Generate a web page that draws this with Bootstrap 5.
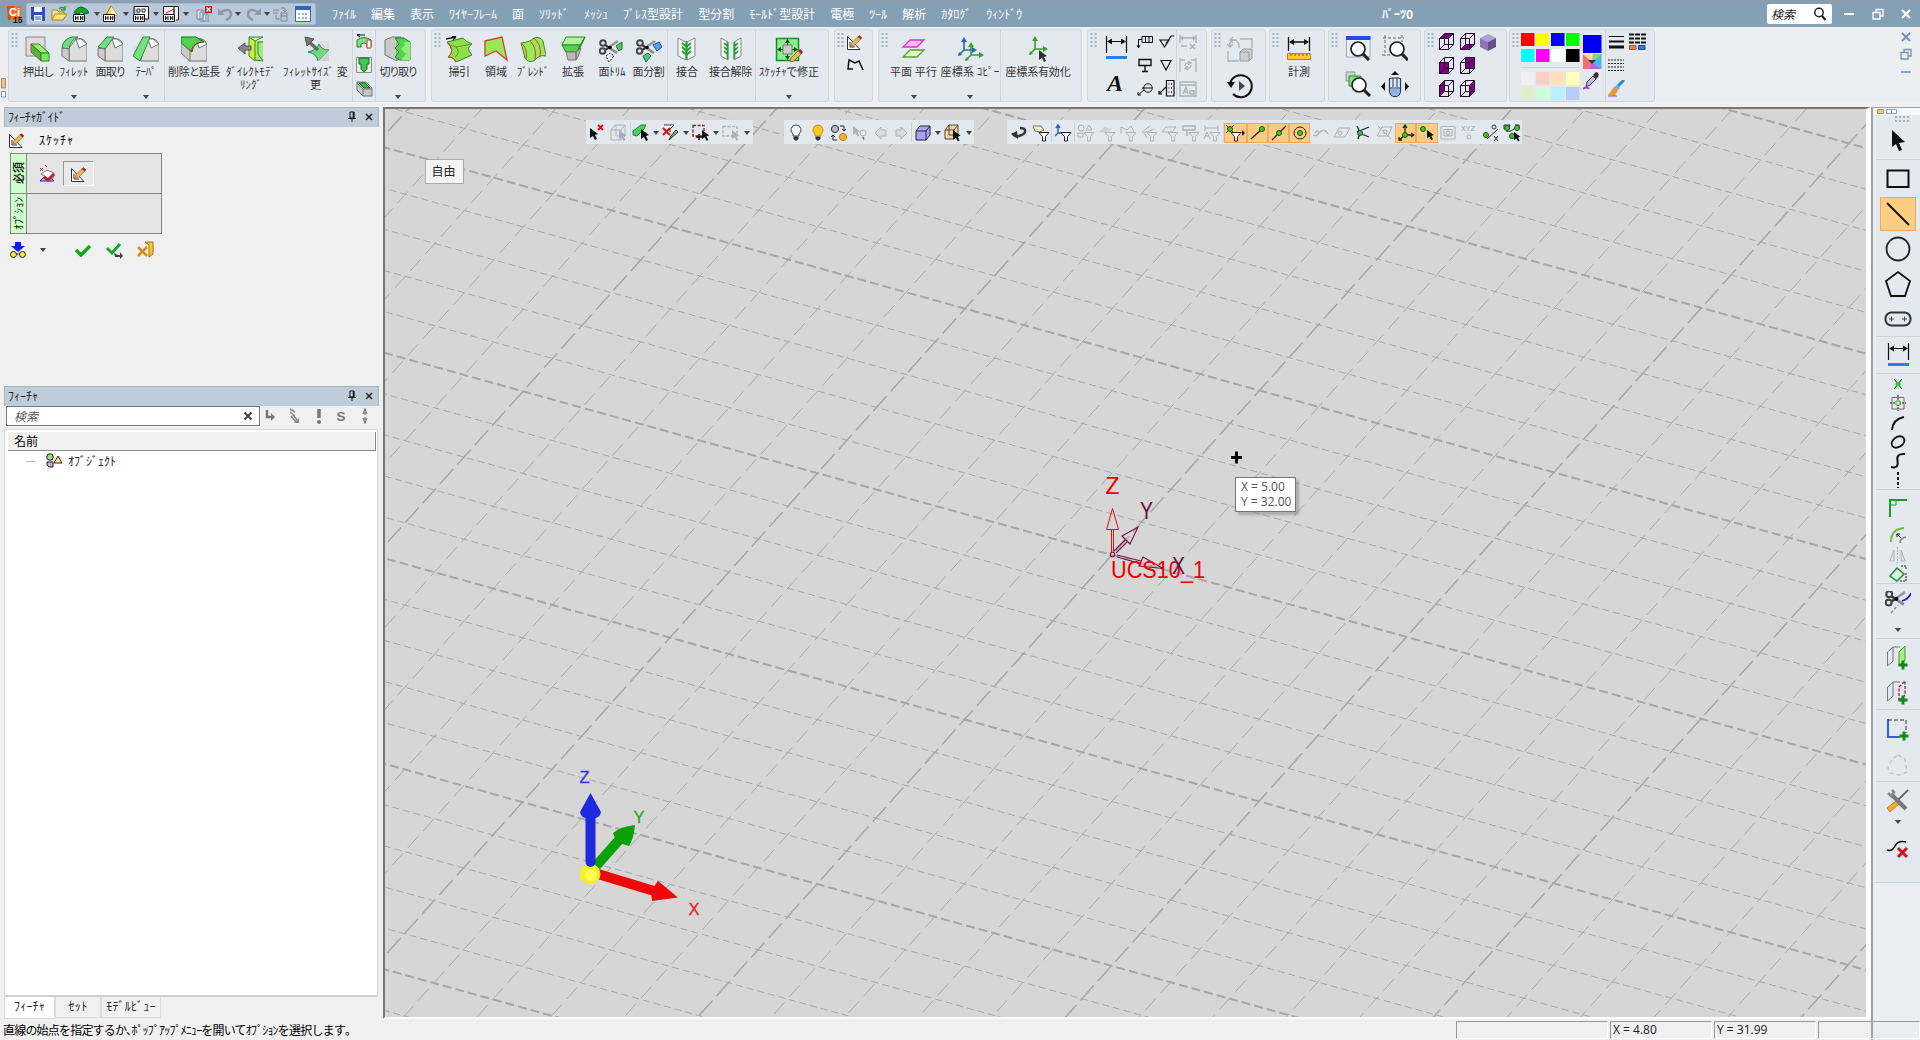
<!DOCTYPE html>
<html lang="ja">
<head>
<meta charset="utf-8">
<title>ﾊﾟｰﾂ0</title>
<link href="https://cdn.jsdelivr.net/npm/bootstrap@5.3.0/dist/css/bootstrap.min.css" rel="stylesheet">
<style>
body{width:1920px;height:1040px;overflow:hidden;background:#f0f0f0;font:12px/14px "Noto Sans CJK JP",sans-serif;color:#222;white-space:nowrap;cursor:default}
svg{display:block;flex:none}
.ic{display:flex;align-items:center;justify-content:center;flex:none}
.titlebar{height:27px;background:#84a0b5;color:#fff;border-top:1px solid #929ca6}
.quick{margin-left:2px;width:290px;height:22px;background:#b9c9d9;border:1px solid #a7bacb;border-radius:2px}
.menus{gap:15px;margin-left:16px}
.docname{position:absolute;left:1382px}
.find{width:65px;height:20px;background:#fff;border-radius:2px;color:#222;font-style:italic;padding:0 5px 0 4px}
.wbtn{width:29px}
.ribbon{height:75px;background:#eceff2;padding-top:2px}
.grp{height:73px;background:#e3e9ef;border:1px solid #cfd6dd;border-radius:3px;flex:none}
.grip{width:8px;padding:3px 0 0 2px;flex:none}
.tile{height:71px;padding-top:6px;flex:none;overflow:visible}
.tile .cap{margin-top:3px;font-size:11px;line-height:13px;text-align:center;color:#333;font-feature-settings:"palt"}
.caret{width:0;height:0;border:3px solid transparent;border-top:4px solid #444;border-bottom:0;flex:none}
.tile .caret{margin-top:auto;margin-bottom:2px}
.vsep{width:1px;background:#cdd4db;flex:none}
.main{height:917px;padding-top:5px}
.side{width:383px;flex:none;padding-left:4px}
.phead{height:20px;width:375px;background:#bfccd9;border:1px solid #a9b5c2;border-bottom:0;padding:0 0 1px 3px}
.guide{height:279px}
.opts{width:152px;height:81px;margin:4px 0 0 6px;border:1px solid #868686;background:#e4e4e4}
.opts .line+.line{border-top:1px solid #868686}
.vlabel{width:16px;background:#ccffcc;border-left:1px solid #868686;writing-mode:vertical-rl;text-orientation:sideways;transform:rotate(180deg);text-align:center;font-size:11px;line-height:15px}
.pressed{width:31px;height:25px;margin-left:4px;background:#eaeaea;border:1px solid #999;border-right-color:#fff;border-bottom-color:#fff}
.tsearch{width:254px;height:20px;background:#fff;border:1px solid #777;margin-left:2px;padding:0 6px 1px 7px;font-style:italic;color:#555}
.tree{width:374px;height:568px;background:#fff;border:1px solid #d8d8d8;border-bottom:2px solid #d0d0d0;margin-top:3px;padding:2px 1px 0 3px}
.thead{height:19px;background:#f0f0f0;border-right:1px solid #888;border-bottom:1px solid #888;padding-left:6px;line-height:17px}
.ptab{height:21px;border:1px solid #dcdcdc;border-top:0;text-align:center;line-height:17px}
.view{width:1488px;height:912px;flex:none;background:#d6d6d6;border:2px solid #777;border-right:5px solid #fff;border-bottom:2px solid #fff;position:relative;overflow:hidden}
.scene{position:absolute;left:-2px;top:-2px}
.vbar{position:absolute;top:11px;height:24px;background:#e2e8ee;align-items:stretch}
.vbar .ic{height:20px;margin-top:3px}
.vbar .vsep{margin:2px 0}
.hot{background:#ffcc80;outline:1px solid #f3a66a;outline-offset:-1px}
.free{position:absolute;left:40px;top:50px;width:39px;height:25px;background:#f3f3f3;border:1px solid #aaa;line-height:21px;text-align:center;padding-right:2px}
.coord{position:absolute;left:850px;top:368px;width:61px;height:35px;background:#fff;border:1px solid #777;box-shadow:3px 3px 2px #8888;font:12px/15px "Open Sans","Noto Sans",sans-serif;color:#555;padding:1px 0 0 5px}
.rail{width:49px;height:933px;border-left:2px solid #9ba1aa;border-top:1px solid #9ba1aa;background:#ebeff3;flex:none}
.railbox{height:768px;background:#e3e9ef;border-left:3px solid #e9edf1;border-bottom:1px solid #cdd4db}
.hsep{height:1px;background:#cdd4db;flex:none}
.status{height:21px}
.cell{height:18px;border:1px solid #999;border-right-color:#fff;border-bottom-color:#fff;margin-right:2px;padding-left:2px;line-height:16px;font-family:"Open Sans","Noto Sans",sans-serif}
</style>
<script src="https://cdn.jsdelivr.net/npm/bootstrap@5.3.0/dist/js/bootstrap.bundle.min.js"></script>
</head>
<body>
<header class="titlebar d-flex align-items-center position-relative">
  <span class="ic ps-1" data-i="logo"></span>
  <div class="quick d-flex align-items-center" id="quick"></div>
  <nav class="menus d-flex">
    <span>ﾌｧｲﾙ</span><span>編集</span><span>表示</span><span>ﾜｲﾔｰﾌﾚｰﾑ</span><span>面</span><span>ｿﾘｯﾄﾞ</span><span>ﾒｯｼｭ</span><span>ﾌﾟﾚｽ型設計</span><span>型分割</span><span>ﾓｰﾙﾄﾞ型設計</span><span>電極</span><span>ﾂｰﾙ</span><span>解析</span><span>ｶﾀﾛｸﾞ</span><span>ｳｨﾝﾄﾞｳ</span>
  </nav>
  <span class="docname fw-bold" data-w="31">ﾊﾟｰﾂ0</span>
  <div class="find d-flex align-items-center justify-content-between ms-auto"><span>検索</span><span class="ic" data-i="mag"></span></div>
  <span class="ic wbtn" data-i="wmin" style="margin-left:2px"></span><span class="ic wbtn" data-i="wmax"></span><span class="ic" data-i="wclose" style="width:28px"></span>
</header>
<div class="ribbon d-flex">
  <div class="d-flex flex-column justify-content-end" style="width:8px"><span class="ic mb-1" data-i="mini"></span></div>
  <div class="d-flex" id="ribbon"></div>
  <div class="ms-auto d-flex flex-column align-items-center" style="width:28px"><span class="ic" style="height:15px" data-i="mclose"></span><span class="ic" style="height:19px" data-i="mmax"></span><span class="ic" style="height:18px" data-i="mmin"></span></div>
</div>
<div class="d-flex main">
  <aside class="side">
    <section class="guide">
      <div class="phead d-flex align-items-center"><span data-w="56">ﾌｨｰﾁｬｶﾞｲﾄﾞ</span><span class="ic ms-auto" data-i="pin" style="width:16px"></span><span class="ic" data-i="px" style="width:18px"></span></div>
      <div class="d-flex align-items-center pt-1 ps-1"><span class="ic" data-i="sketch"></span><span class="text-black" style="margin-left:13px" data-w="35">ｽｹｯﾁｬ</span></div>
      <div class="opts">
        <div class="line d-flex" style="height:39px"><div class="vlabel fw-bold">必須</div><div class="d-flex align-items-center ps-2"><span class="ic" style="width:24px" data-i="eraser"></span><span class="pressed ic" data-i="sketch"></span></div></div>
        <div class="line d-flex" style="height:40px"><div class="vlabel">ｵﾌﾟｼｮﾝ</div></div>
      </div>
      <div class="d-flex align-items-center" style="height:32px;padding-left:4px"><span class="ic" style="width:20px" data-i="glasses"></span><span class="caret" style="margin-left:12px"></span><span class="ic" style="width:32px;margin-left:21px" data-i="ok"></span><span class="ic" style="width:32px" data-i="okgo"></span><span class="ic" style="width:30px" data-i="exit"></span></div>
    </section>
    <section>
      <div class="phead d-flex align-items-center"><span data-w="30">ﾌｨｰﾁｬ</span><span class="ic ms-auto" data-i="pin" style="width:16px"></span><span class="ic" data-i="px" style="width:18px"></span></div>
      <div class="d-flex align-items-center"><div class="tsearch d-flex align-items-center"><span>検索</span><span class="ic ms-auto" data-i="px2"></span></div><span class="ic" style="width:20px" data-i="t1"></span><span class="ic" style="width:28px" data-i="t2"></span><span class="ic" style="width:22px" data-i="t3"></span><span class="ic" style="width:22px" data-i="t4"></span><span class="ic" style="width:26px" data-i="t5"></span></div>
      <div class="tree">
        <div class="thead text-black">名前</div>
        <div class="d-flex align-items-center" style="height:20px;padding-left:18px"><span style="width:9px;border-top:1px solid #bbb"></span><span class="ic" style="margin-left:11px" data-i="objs"></span><span style="margin-left:5px" data-w="48">ｵﾌﾞｼﾞｪｸﾄ</span></div>
      </div>
      <div class="d-flex"><div class="ptab bg-white" style="width:51px;height:22px"><span data-w="31">ﾌｨｰﾁｬ</span></div><div class="ptab" style="width:46px"><span data-w="19">ｾｯﾄ</span></div><div class="ptab" style="width:60px"><span data-w="50">ﾓﾃﾞﾙﾋﾞｭｰ</span></div></div>
    </section>
  </aside>
  <main class="view">
    <svg class="scene" width="1484" height="912" viewBox="383 107 1484 912">
      <g id="grid" fill="none"></g>
      <g fill="none" stroke="#e01010" stroke-width="1"><path d="M1111.500 552V529M1113.500 552V529M1106.500 529.500H1118.500L1112.500 508.500Z"/></g>
      <g fill="none" stroke="#7a1040" stroke-width="1.100"><circle cx="1112.500" cy="554.500" r="2.300"/><path d="M1114 551L1126 539M1116 553L1128 541M1122 536L1138 527L1130 544ZM1117 555L1141 561M1117 557L1140 563.500M1143 557L1163 568.500L1139 566Z"/></g>
      <g font-family="Liberation Sans,sans-serif" font-size="23.500" fill="#f00000"><text x="1105.500" y="494" textLength="14" lengthAdjust="spacingAndGlyphs">Z</text><text x="1111" y="577.500" textLength="94" lengthAdjust="spacingAndGlyphs">UCS10_1</text><text x="1140" y="519" fill="#6a0f3c" textLength="13" lengthAdjust="spacingAndGlyphs">Y</text><text x="1172" y="574" fill="#6a0f3c" textLength="13" lengthAdjust="spacingAndGlyphs">X</text></g>
      <path d="M596 866L619 840" stroke="#0aa00a" stroke-width="10"/><path d="M613 833Q622 826 635 825Q634 838 629 846Q616 844 613 833Z" fill="#0aa00a"/>
      <path d="M598 874L654 891" stroke="#f00808" stroke-width="10"/><path d="M658 881L678 897.500L652 901Q650 890 658 881Z" fill="#f00808"/>
      <ellipse cx="590" cy="874" rx="10.500" ry="10" fill="#f6f020"/><circle cx="591" cy="875" r="6" fill="#ffff50"/>
      <path d="M590.500 818V862" stroke="#1e2ae0" stroke-width="10" stroke-linecap="round"/><path d="M590.500 793L601 812Q600 819 590.500 819Q581 819 580 812Z" fill="#1e2ae0"/>
      <g font-family="Liberation Sans,sans-serif" font-size="16.500" stroke-width=".3"><text x="579.500" y="782.500" fill="#3c3cd8" stroke="#3c3cd8">Z</text><text x="633.500" y="822.500" fill="#2aa52a" stroke="#2aa52a">Y</text><text x="688.500" y="914.500" fill="#e82020" stroke="#e82020">X</text></g>
      <path d="M1236.500 451.500V463.500M1231 457.500H1242" stroke="#000" stroke-width="3"/>
    </svg>
    <div class="vbar d-flex" id="vb1" style="left:201px"></div>
    <div class="vbar d-flex" id="vb2" style="left:399px"></div>
    <div class="vbar d-flex" id="vb3" style="left:622px"></div>
    <div class="free">自由</div>
    <div class="coord">X = 5.00<br>Y = 32.00</div>
  </main>
  <aside class="rail"><div class="ic justify-content-start ps-1 bg-light" style="height:7px" data-i="mini2"></div>
    <div class="railbox d-flex flex-column" id="rail"></div></aside>
</div>
<footer class="status d-flex align-items-center"><span class="text-black" style="margin-left:3px" data-w="344">直線の始点を指定するか､ﾎﾟｯﾌﾟｱｯﾌﾟﾒﾆｭｰを開いてｵﾌﾟｼｮﾝを選択します｡</span>
  <div class="cell ms-auto" style="width:152px"></div><div class="cell" style="width:102px">X = 4.80</div><div class="cell" style="width:102px">Y = 31.99</div><div class="cell me-0" style="width:102px"></div></footer>
<script>
const body='<path d="M1 12L9 2H19L26 9V26H7L1 20Z" fill="#ddd"/><path d="M8 12L15 3Q24 1 26 9V25H8Z" fill="#dcdcdc" stroke="#777"/><path d="M15 3H20L26 8L18 12Z" fill="#fff" stroke="#777"/>';
const axes=(x,y,c)=>`<g transform="translate(${x} ${y})" stroke="${c}" fill="${c}" stroke-width="1.600"><path d="M0 0V-10M0 0H9M0 0L-5 5"/><path d="M-3 -8L0 -13L3 -8ZM8 -3L13 0L8 3ZM-2 5L-6 6L-5 2Z" stroke="none"/></g>`;
const arrow=(x,y,c='#111',k=1)=>`<path transform="translate(${x} ${y}) scale(${k})" d="M0 0L8 6L5 7L7 11L5 12L3 8L0 10Z" fill="${c}"/>`;
const pencil=(x,y,k=1)=>`<g transform="translate(${x} ${y}) scale(${k})"><path d="M0 12L1 8L9 0L12 3L4 11Z" fill="#e9b955" stroke="#8a5a1e" stroke-width=".8"/><path d="M8 1L10 -1L13 2L11 4Z" fill="#a02820"/></g>`;
const funnel=(x,y,c='#222',f='#fff')=>`<path transform="translate(${x} ${y})" d="M0 .500H10L6.500 4.500V9H3.500V4.500Z" fill="${f}" stroke="${c}"/>`;
const dot=(x,y,c='#49c32d',s='#145a10')=>`<circle cx="${x}" cy="${y}" r="2.500" fill="${c}" stroke="${s}"/>`;
const hh='<path d="M0.500 8.500H11.500V15.500H.500Z" fill="#fff" stroke="#111"/><path d="M2.500 10V14M2.500 12H5M5 10V14M7.500 10V14M7.500 12H10M9.800 10V14" stroke="#111" fill="none"/>';
const dim=(c='#111',b='#2d7de8')=>`<path d="M1.500 0V17M21.500 0V17M3 5.500H20" stroke="${c}" stroke-width="1.200"/><path d="M2 5.500L7 2.500V8.500ZM21 5.500L16 2.500V8.500Z" fill="${c}"/><path d="M1 21.500H22" stroke="${b}" stroke-width="3"/>`;
const plus=(x,y)=>`<path d="M${x} ${y-4.500}V${y+4.500}M${x-4.500} ${y}H${x+4.500}" stroke="#118a1c" stroke-width="3"/>`;
const mag=(x,y,r=7)=>`<circle cx="${x}" cy="${y}" r="${r}" fill="#fff" stroke="#222" stroke-width="1.700"/><path d="M${x+r*.7} ${y+r*.7}L${x+r+4} ${y+r+4}" stroke="#222" stroke-width="3"/>`;
const sciss=(x,y,k=1)=>`<g transform="translate(${x} ${y}) scale(${k})" fill="none" stroke="#444" stroke-width="2"><circle cx="4" cy="3" r="2.800"/><circle cx="3.500" cy="11" r="2.800"/><path d="M6 5L18 13" stroke="#888" stroke-width="2.500"/><path d="M6 10L19 1" stroke="#999" stroke-width="2.500"/><path d="M6 5L11 8M6 10L11 7" stroke="#333"/><circle cx="11" cy="7.500" r=".8" stroke="#000"/></g>`;
const bulb=(f,s)=>`<path d="M8 1A5 5 0 0 0 5 10V12H11V10A5 5 0 0 0 8 1Z" fill="${f}" stroke="${s}"/><path d="M5.500 12.500H10.500V15L8 17L5.500 15Z" fill="#333"/>`;
const vc=f=>`<path d="${f}" fill="#800080"/><path d="M1.500 5.500L6.500 .500H15.500V11.500L10.500 16.500H1.500ZM1.500 5.500H10.500V16.500M10.500 5.500L15.500 .500M6.500 .500V11.500H15.500M6.500 11.500L1.500 16.500" fill="none" stroke="#2a0a35"/>`;
const g='#aab2ba';
const ICON={
logo:[20,18,'<path d="M3 1L17 1V15H4Z" fill="#e8722e"/><path d="M3 1L10 1L6 15H4Z" fill="#c8561c"/><text x="5" y="11" font-family="Liberation Sans" font-weight="700" font-size="11" fill="#fff">Ci</text><text x="9" y="17.500" font-family="Liberation Sans" font-weight="700" font-size="8.500" fill="#111">15</text>'],
save:[16,16,'<path d="M1 1H15V15H3L1 13Z" fill="#2c50b4"/><path d="M4 1H12V6H4ZM4 9H12V15H4Z" fill="#fff"/><path d="M5 11H11M5 13H11" stroke="#2c50b4"/>'],
open:[16,16,'<path d="M1 14V4H6L8 6H13V8" fill="#f8e49c" stroke="#a88420"/><path d="M1 14L4 8H16L12 14Z" fill="#fbe27a" stroke="#a88420"/><path d="M8 3Q11 0 14 3M14 0V4H10" stroke="#289a38" fill="none" stroke-width="1.300"/>'],
q1:[16,16,'<path d="M1 7Q3 1 9 1Q15 3 16 7L11 8Q9 4 6 8Z" fill="#18a51e" stroke="#064"/>'+hh],q2:[16,16,'<path d="M8 0L14 9H3Z" fill="#ffd94d" stroke="#a07010"/><path d="M8 0L14 9H8Z" fill="#fff3b0"/>'+hh],
q3:[16,16,'<path d="M1 .500H15.500V13H12M1 .500V8" stroke="#111" fill="#fff"/><path d="M4 3H7V6H4ZM9 3H12V6H9Z" fill="none" stroke="#333"/>'+hh],q4:[16,16,'<path d="M.500 8V.500H15.500V14H13" fill="#eee" stroke="#222"/><path d="M3 7L11 3V7" stroke="#b22" fill="none"/><path d="M11 0V9" stroke="#111"/>'+hh],
q5:[16,16,'<path d="M1 4H7V13H1ZM4 6H10V15H4ZM7 8H12V16H7Z" fill="#dfe8f2" stroke="#6a86a8"/><path d="M9 0H16V7H9Z" fill="#cc1520"/><path d="M10.500 1.500L14.500 5.500M14.500 1.500L10.500 5.500" stroke="#fff" stroke-width="1.400"/>'],
undo:[16,16,'<path d="M3 6Q12 1 13 8Q13 12 8 14" stroke="#8c9aa8" stroke-width="2.500" fill="none"/><path d="M0 2V9H7Z" fill="#8c9aa8"/>'],redo:[16,16,'<path d="M13 6Q4 1 3 8Q3 12 8 14" stroke="#8c9aa8" stroke-width="2.500" fill="none"/><path d="M16 2V9H9Z" fill="#8c9aa8"/>'],
q6:[16,16,'<path d="M1 4H7M1 7H6M9 7H15V15H9ZM4 9V13H8M9 2H13V6M11 4L13 6L15 4" fill="none" stroke="#7c8a98"/><path d="M9 10H15" stroke="#7c8a98"/>'],
list:[16,16,'<path d="M.500 .500H15.500V15.500H.500Z" fill="#fff" stroke="#3564c0"/><path d="M0 0H16V4H0Z" fill="#3564c0"/><path d="M3 8H5M3 12H5M7 8H13M7 12H13" stroke="#3564c0" stroke-dasharray="2 1"/>'],
mag:[14,14,'<circle cx="6" cy="5.500" r="4.200" fill="none" stroke="#222" stroke-width="1.500"/><path d="M9 9L12.500 13" stroke="#222" stroke-width="2.200"/>'],
wmin:[12,12,'<path d="M1 6H11" stroke="#fff" stroke-width="2"/>'],wmax:[12,12,'<path d="M4 4V1.500H11V8H8M1 4.500H8V11H1Z" fill="none" stroke="#fff" stroke-width="1.300"/>'],wclose:[12,12,'<path d="M2 2L10 10M10 2L2 10" stroke="#fff" stroke-width="2.200"/>'],
mmin:[12,12,'<path d="M1 6H11" stroke="#7791b3" stroke-width="1.600"/>'],mmax:[12,12,'<path d="M4 4V1.500H11V8H8M1 4.500H8V11H1Z" fill="none" stroke="#7791b3" stroke-width="1.300"/>'],mclose:[12,12,'<path d="M2 2L10 10M10 2L2 10" stroke="#7791b3" stroke-width="2"/>'],
mini:[6,20,'<path d="M.500 .500H4.500V10H.500Z" fill="#e8c880" stroke="#a89060"/><path d="M.500 13.500H4.500V19H.500Z" fill="#fff" stroke="#7d93b0"/>'],mini2:[22,5,'<path d="M.500 .500H6.500V4.500H.500Z" fill="#f0c680" stroke="#a89060"/><path d="M9.500 .500H14.500V4.500H9.500ZM14.500 .500H19.500V4.500H14.500Z" fill="#fff" stroke="#8ba0ba"/>'],
grip:[7,14,'<path d="M1.500 0V14M5.500 0V14" stroke="#9db0c2" stroke-width="2" stroke-dasharray="2 2"/>'],grip2:[24,6,'<path d="M9 1H24M9 5H24" stroke="#9db0c2" stroke-width="2" stroke-dasharray="2 2"/>'],
r1:[26,26,'<path d="M1 1H20V20H1Z" fill="#e0dcdc" stroke="#888"/><path d="M6 8H14L24 17H16Z" fill="#9cf07a" stroke="#2b8a22"/><path d="M6 8L16 17V25L6 16Z" fill="#46bb3c" stroke="#c03020" stroke-width=".8"/><path d="M16 17H24V25H16Z" fill="#7ae860" stroke="#2b8a22"/>'],
r2:[26,26,body+'<path d="M1 12Q2 3 11 1H17Q9 4 8 13Z" fill="#72dd7c" stroke="#2b8a42"/><path d="M1 12L8 13V25L1 20Z" fill="#ccc" stroke="#777"/>'],
r3:[26,26,body+'<path d="M1 11L10 1H17L8 13Z" fill="#72dd7c" stroke="#2b8a42"/><path d="M1 12L8 13V25L1 20Z" fill="#ccc" stroke="#777"/>'],
r4:[26,26,body+'<path d="M0 20L10 1H17L7 25Z" fill="#78e080" stroke="#2b8a42"/>'],
r5:[26,26,body+'<path d="M0 1H15L23 6Q12 6 11 16L0 7Z" fill="#4fd450" stroke="#176a20"/><path d="M10 16Q11 8 20 6" stroke="#d02020" fill="none"/><path d="M0 7L9 15V25L0 17Z" fill="#ccc" stroke="#777"/>'],
r6:[26,26,'<path d="M17 5H25V25H17Z" fill="#a8e878"/><path d="M17 5L25 1M17 24L25 25" stroke="#2b8a22"/><path d="M11 1L17 5V25L11 20Z" fill="#c6f03a" stroke="#4a8a10"/><path d="M11 1H25M20 6H25M20 6V18L25 25" stroke="#2b8a22" fill="none"/><path d="M0 12L7 7V10H13V14H7V18Z" fill="#888" stroke="#555"/>'],
r7:[26,26,'<path d="M15 5H26V14H20Z" fill="#ddd"/><path d="M5 16Q14 14 16 8Q18 14 26 14L15 25Q14 18 5 16Z" fill="#6edb80" stroke="#2b8a42"/><path d="M15 25L26 14V25Z" fill="#d4d4d4"/><path d="M6 6L15 14" stroke="#666" stroke-width="3.500"/><path d="M2 1L11 3L4 10Z" fill="#777" stroke="#555"/>'],
r8:[28,26,'<path d="M1 4L8 1H17L13 7V25L1 19Z" fill="#c9c9c9" stroke="#777"/><path d="M11 2H20L26 6V24H15L11 21L15 16L11 12L15 8Z" fill="#4fd450" stroke="#2a7a2a"/><path d="M20 6H26V24H17L22 18L17 13L21 9Z" fill="#90ee7a"/>'],
s1:[16,16,'<path d="M1 6Q8 1 15 6V13H11V10Q8 8 5 10V13H1Z" fill="#7ee080" stroke="#2b7a32"/><path d="M11 6H15V14H11Z" fill="#fff" stroke="#d03020"/><path d="M1 1H9M1 1L4 0M1 1L4 3" stroke="#111"/>'],s2:[16,16,'<path d="M.500 .500H15.500V15.500H.500Z" fill="#ececec" stroke="#888"/><path d="M3 1H13V7H11V12L8 15L5 12V7H3Z" fill="#42c850" stroke="#176a20"/>'],s3:[17,16,'<path d="M1 1H10L16 7V15H7L1 9Z" fill="#c6c6c6" stroke="#777"/><path d="M3 2H9L14 7H8Z" fill="#33bb44" stroke="#176a20"/><path d="M1 2L7 8V15M7 8H16" stroke="#777" fill="none"/>'],
f1:[26,26,'<path d="M1 6L17 2Q20 6 26 8Q19 12 26 19L10 26Q8 21 2 21Q10 15 1 6Z" fill="#8de048" stroke="#2b8a22"/><path d="M1 6Q4 10 10 11L26 8M10 11Q15 17 9 21" stroke="#5a9a30" fill="none"/><path d="M1 6Q10 15 2 21Q8 21 10 26" stroke="#d04030" fill="none"/><path d="M0 3L10 1M10 1L6 0M10 1L7 4" stroke="#111" stroke-width="1.300"/>'],
f2:[26,26,'<path d="M2 5L19 1L24 24L13 15L2 20Z" fill="#98e858" stroke="#d04030" stroke-width="1.300"/>'],
f3:[26,26,'<path d="M1 7Q10 6 14 2Q20 0 23 5L26 20Q19 18 14 25Q8 27 5 22Z" fill="#98e858" stroke="#408a22"/><path d="M10 5Q17 11 15 24M1 7Q8 12 6 23M13 2Q22 7 20 21" stroke="#d04030" fill="none"/>'],
f4:[26,26,'<path d="M2 9L6 1H25L21 9Z" fill="#b4f0a0" stroke="#2b8a22"/><path d="M2 9H20L17 16H6ZM20 9L25 1L18 16Z" fill="#58d048" stroke="#2b8a22"/><path d="M6 16H16V24H8ZM16 16L21 12L18 21L16 24Z" fill="#bbb" stroke="#777"/>'],
f5:[26,26,sciss(0,4)+'<path d="M17 10L23 6V13L20 15Z" fill="#48ca68" stroke="#1a7a32"/><path d="M7 20L11 17L15 20L10 26Z" fill="none" stroke="#111" stroke-dasharray="2 1.500"/>'],
f6:[26,26,sciss(0,4)+'<path d="M17 9L23 6L26 11L21 15Z" fill="#5aa0ee" stroke="#1a4aa2"/><path d="M7 20L12 17L15 20L10 26Z" fill="#48ca68" stroke="#1a7a32"/>'],
j1:[26,26,'<path d="M4 2L12 6V24L4 20ZM21 2L13 6V24L21 20Z" fill="#f4f7f4" stroke="#888"/><path d="M8 7L12.500 11L17 7M8 11L12.500 15L17 11M8 15L12.500 19L17 15M12.500 5V24" stroke="#20a030" fill="none" stroke-width="1.700"/>'],
j2:[26,26,'<path d="M3 2L10 6V24L3 20ZM23 2L16 6V24L23 20Z" fill="#f4f7f4" stroke="#888"/><path d="M6 7L9 10M6 11L9 14M6 15L9 18M20 7L17 10M20 11L17 14M20 15L17 18M9.500 6V23M16.500 6V23" stroke="#20a030" fill="none" stroke-width="1.700"/>'],
j3:[30,26,'<path d="M2.500 2.500H24.500V24.500H2.500Z" fill="#8cf08a" stroke="#1a8a32" stroke-width="1.500"/><path d="M13.500 4V23M4 13.500H23" stroke="#0a5a10" stroke-width="1.200"/><path d="M13.500 3L11 7H16ZM13.500 24L11 20H16ZM3 13.500L7 11V16ZM24 13.500L20 11V16Z" fill="#0a5a10"/><path d="M9 9H18V18H9Z" fill="#ccc" stroke="#777"/>'+pencil(16,14)],
sketch:[18,18,'<path d="M1.500 3.500V16.500H14Z" fill="#fff" stroke="#333"/><path d="M4 9V14H9" fill="none" stroke="#333"/>'+pencil(5,3,.85)],
poly2:[18,18,'<path d="M7 13H2L3 4L9 7L13 5L17 14" fill="none" stroke="#111" stroke-width="1.500"/>'],
p1:[26,26,'<path d="M9 4H23L16 11H2Z" fill="#fbe" stroke="#d838d0" stroke-width="1.300"/><path d="M9 14H23L16 21H2Z" fill="#e4f6c8" stroke="#5aa02a" stroke-width="1.300"/>'],
p2:[28,26,axes(8,14,'#2c62b8')+axes(15,19,'#3ba030')],p3:[26,26,axes(10,13,'#3ba030')+arrow(14,14,'#333',1)],
dim:[23,24,dim()],A:[20,22,'<text x="1" y="18" font-family="Liberation Serif" font-style="italic" font-weight="700" font-size="24" fill="#111">A</text>'],
a1:[18,16,'<path d="M6 2.500H16.500V8.500H6ZM9.500 2.500V8.500M13 2.500V8.500M6 5.500H2.500V13M1 11L2.500 14L4 11" fill="none" stroke="#111"/>'],a2:[16,16,'<path d="M2 6H11L6.500 13ZM8 10L13 2H16" fill="none" stroke="#111" stroke-width="1.200"/>'],a3:[16,16,'<path d="M2 2.500H14V8.500H2ZM8 8.500V14M5 14.500H11" fill="none" stroke="#111" stroke-width="1.400"/>'],a4:[16,16,'<path d="M3 3.500H13L8 13Z" fill="none" stroke="#111" stroke-width="1.200"/>'],a5:[16,16,'<circle cx="11" cy="7" r="4.300" fill="none" stroke="#111"/><path d="M5 7H15M7 9L1 14M1 11V14H4" stroke="#111" fill="none"/>'],a6:[17,17,'<path d="M8.500 .500H16V16H8.500ZM8 7L1 14M1 11V14H4" fill="none" stroke="#111" stroke-width="1.200"/><path d="M11 3V14" stroke="#c63" stroke-dasharray="2 2"/><path d="M13.500 3V14" stroke="#24c" stroke-dasharray="2 2"/>'],
b1:[18,16,`<path d="M1 1V9M17 1V9M2 4H16M4 2L2 4L4 6M14 2L16 4L14 6M2 12H8M11 10L16 15M16 10L11 15" fill="none" stroke="${g}" stroke-width="1.300"/>`],b2:[18,16,`<path d="M1 1V15M17 1V15M2 3H6M12 3H16M6 9Q6 5 11 6M12 8Q12 12 7 11M9 4L12 6L9 8M9 9L6 11L9 13" fill="none" stroke="${g}" stroke-width="1.300"/>`],b3:[18,16,`<path d="M1 1H17V15H1ZM1 4H17M4 13L7 6L9 13M5 11H9M11 10H15V13H11Z" fill="none" stroke="${g}" stroke-width="1.300"/>`],
c1:[26,26,`<path d="M6 4Q2 6 3 10M12 12Q13 8 9 4H4M6 1L3 4L6 7M0 8L3 11L6 8M13 3H25V12M1 15V25H12" fill="none" stroke="${g}" stroke-width="1.300"/><path d="M13 16L16 13H25V22L22 25H13Z" fill="#ccd0d4" stroke="#999"/><path d="M13 16H22V25" fill="none" stroke="#999"/>`],c2:[27,26,'<path d="M3 11A11 11 0 1 1 6 21" fill="none" stroke="#111" stroke-width="2"/><path d="M0 9H8L4 15Z" fill="#111"/><path d="M12 8L18 13L12 18Z" fill="#446"/>'],
m1:[24,26,'<path d="M1.500 1V15M22.500 1V15M3 6H21" stroke="#111" stroke-width="1.300"/><path d="M2 6L7 3V9ZM22 6L17 3V9Z" fill="#111"/><path d="M.500 17.500H23.500V23.500H.500Z" fill="#ffc83a" stroke="#b08010"/><path d="M4 18V20M8 18V20M12 18V20M16 18V20M20 18V20" stroke="#7a5a10"/>'],
z1:[26,26,'<path d="M1.500 2H25V22H1.500Z" fill="#eaeff6" stroke="#9ab"/><path d="M1 1H25.500V5H1Z" fill="#1e50e0"/>'+mag(13,14)],z2:[26,26,'<path d="M3 0V21M1 3H22M0 20H8M20 0V7" stroke="#667" stroke-dasharray="3 2" fill="none"/>'+mag(15,14)],z3:[26,26,'<path d="M1 1H10V10H1Z" fill="#cdd6cd" stroke="#8a9a8a"/><path d="M4 5H16V15H4Z" fill="#84e27c" stroke="#2b8a32"/>'+mag(14,14)],
z4:[30,26,'<path d="M11 4L15 0L19 4ZM5 11V20L1 15.500ZM25 11V20L29 15.500Z" fill="#111"/><path d="M9.500 9Q9 7 12 7H18Q21 7 20.500 9V20Q20 25.500 15 25.500Q10 25.500 9.500 20Z" fill="#dceaf8" stroke="#335" stroke-width="1.200"/><path d="M10 18H20Q20 25 15 25Q10 25 10 18Z" fill="#8ab4e8"/><path d="M9.500 17H20.500M13 7V16M17 7V16" stroke="#335"/>'],
v1:[17,17,vc('M1.500 5.500L6.500 .500H15.500L10.500 5.500Z')],v2:[17,17,vc('M1.500 16.500L6.500 11.500H15.500L10.500 16.500Z')],v3:[18,18,'<path d="M1 5L9 1L17 5L9 9Z" fill="#b0a0d0"/><path d="M1 5L9 9V18L1 14Z" fill="#8c78b4"/><path d="M17 5L9 9V18L17 14Z" fill="#68508c"/>'],v4:[17,17,vc('M1.500 5.500H10.500V16.500H1.500Z')],v5:[17,17,vc('M6.500 .500H15.500V11.500H6.500Z')],v6:[17,17,vc('M1.500 5.500L6.500 .500V11.500L1.500 16.500Z')],v7:[17,17,vc('M10.500 5.500L15.500 .500V11.500L10.500 16.500Z')],
pal:[59,71,[['#f00',0,2],['#ff0',15,2],['#00f',30,2],['#0f0',45,2],['#0ff',0,18],['#f0f',15,18],['#fff',30,18],['#000',45,18],['#f0f0f0',0,41],['#ffcccc',15,41],['#ffe0b8',30,41],['#ffffc0',45,41],['#dfeecb',0,56],['#ccffd8',15,56],['#b8f0ff',30,56],['#b8ccff',45,56]].map(a=>`<rect x="${a[1]}" y="${a[2]+1}" width="13.500" height="13" fill="${a[0]}"/>`).join('')+'<path d="M0 37.500H58" stroke="#cdd4db"/>'],
cur:[19,56,'<path d="M0 0H18.500V18H0Z" fill="#0000f0"/><path d="M0 19H18.500V34H0Z" fill="#ffe060"/><path d="M9 27L0 19V34H9Z" fill="#f07070"/><path d="M9 27L0 19H10Z" fill="#f8dca8"/><path d="M9 27L18.500 19V34Z" fill="#48b8e8"/><path d="M9 27L18.500 34H6Z" fill="#a868e0"/><path d="M9 27L10 19H18.500Z" fill="#80d870"/><path d="M5 25H13L9 29Z" fill="#333"/><path d="M3 52L4 47L10 41L13 44L7 50Z" fill="#c8b0e8" stroke="#444"/><path d="M10 40L13 37Q17 38 15 42L13 44Z" fill="#333"/><path d="M0 54Q4 51 6 54" stroke="#a040e0" stroke-width="2" fill="none"/>'],
l1:[16,16,'<path d="M1 2.500H16" stroke="#111"/><path d="M1 7.500H16" stroke="#111" stroke-width="2"/><path d="M1 13H16" stroke="#111" stroke-width="3"/>'],l2:[16,16,'<path d="M0 3H16M0 6.500H16M0 10H16M0 13.500H16" stroke="#222" stroke-width="1.200" stroke-dasharray="2 1"/>'],l3:[17,17,'<path d="M0 15L6 7L10 10L7 16Z" fill="#e09a38"/><path d="M6 7L9 5L12 8L10 10Z" fill="#7ac"/><path d="M10 6L16 0" stroke="#2c88cc" stroke-width="3"/><path d="M0 16H9" stroke="#a040e0"/>'],l4:[17,17,'<path d="M0 1.500H17M0 5.500H17M0 9.500H17" stroke="#111" stroke-width="2" stroke-dasharray="5 1"/><path d="M.500 12.500H7V16.500H.500Z" fill="#e8823a" stroke="#a54"/><path d="M9.500 12.500H16V16.500H9.500Z" fill="#2d7de8" stroke="#248"/>'],
pin:[10,12,'<path d="M3 1H7V7H3ZM1 7.500H9M5 8V11" stroke="#111" fill="none"/><path d="M6.500 1V7" stroke="#111" stroke-width="1.500"/>'],px:[10,10,'<path d="M2 2L8 8M8 2L2 8" stroke="#222" stroke-width="1.500"/>'],px2:[10,10,'<path d="M1.500 1.500L8.500 8.500M8.500 1.500L1.500 8.500" stroke="#444" stroke-width="2"/>'],
eraser:[18,18,'<path d="M2 16H16L12 12H6Z" fill="#aab8f8" stroke="#22a"/><path d="M3 9L9 5L16 8L15 13L10 15L7 11Z" fill="#fff" stroke="#777"/><path d="M6 12L10 15L16 9" stroke="#d01828" stroke-width="3" fill="none"/><path d="M2 3L5 6M5 3L2 6M7 0L9 2" stroke="#b33"/>'],
glasses:[18,18,'<path d="M6 1H12V5H16L9 11L2 5H6Z" fill="#1020e0"/><circle cx="4.500" cy="13.500" r="3" fill="#f4f040" stroke="#222"/><circle cx="13.500" cy="13.500" r="3" fill="#f4f040" stroke="#222"/><path d="M7 13H11" stroke="#222"/>'],
ok:[18,16,'<path d="M2 8L7 13L16 4" stroke="#12a81e" stroke-width="3.500" fill="none"/>'],okgo:[18,18,'<path d="M1 7L6 12L14 3" stroke="#12a81e" stroke-width="2.800" fill="none"/><path d="M8 12L12 14H14V11L17 15L14 18V16H9Z" fill="#444"/>'],exit:[18,18,'<path d="M8 1H16V13L12 16V4L8 1" fill="#ffc820" stroke="#a07010"/><path d="M1 6L10 15M10 6L1 15" stroke="#d88a1c" stroke-width="2.500"/>'],
t1:[12,14,'<path d="M3 1V8H8" stroke="#777" stroke-width="2.500" fill="none"/><path d="M7 4V12L11 8Z" fill="#777"/>'],t2:[12,16,'<path d="M2 1L7 4M2 4L7 8M3 8L8 14M5 7L10 13" stroke="#888" stroke-width="1.600"/><path d="M11 10V15H6Z" fill="#888"/>'],t3:[8,16,'<path d="M4 1V10" stroke="#777" stroke-width="3.500"/><circle cx="4" cy="14" r="2" fill="#777"/>'],t4:[12,14,'<text x="1.500" y="12" font-family="Liberation Sans" font-weight="700" font-size="13.500" fill="#777">S</text>'],t5:[10,16,'<path d="M3 6L5 1L7 6M5 4V7M3 10L5 15L7 10M5 9V12" stroke="#777" fill="none" stroke-width="1.200"/>'],
objs:[17,16,'<circle cx="4" cy="4" r="3.300" fill="#9bd88a" stroke="#222"/><path d="M12 3L16 10H8Z" fill="#ffe98a" stroke="#222"/><path d="M1 9H7V14H3L1 12Z" fill="#c9a8e0" stroke="#222"/>'],
x1:[18,18,arrow(2,4,'#111',1)+'<path d="M10 1L15 6M15 1L10 6" stroke="#cc1520" stroke-width="2"/>'],x2:[18,18,`<path d="M1 6L5 1H15V12L11 16H1ZM1 6H11V16M11 6L15 1M6 1V12H15" stroke="${g}" fill="none"/>`+arrow(9,6,'#aab',.9)],x3:[18,18,'<path d="M1 7L9 1L14 1L12 5L5 12L1 11Z" fill="#4ccf5c" stroke="#1a8a32"/>'+arrow(9,5)],x4:[18,18,'<path d="M2 1H12L8 5V8" fill="#fff" stroke="#333"/><path d="M1 4L8 11M8 4L1 11" stroke="#cc1520" stroke-width="2"/><path d="M7 16L9 12L14 6L16 8Z" fill="#7ad070" stroke="#222"/>'],x5:[18,18,'<path d="M1 1.500H12V12H1Z" stroke="#b01030" fill="none" stroke-dasharray="3 1.500" stroke-width="1.400"/><path d="M7 10V16M4 13H10" stroke="#111" stroke-width="1.600"/>'+arrow(10,6,'#111',.9)],x6:[18,18,`<path d="M1 2.500H15V12H1Z" stroke="${g}" fill="none" stroke-dasharray="3 1.500" stroke-width="1.400"/>`+arrow(10,6,g,.9)],
y1:[16,18,bulb('#f4f4f4','#444')],y2:[16,18,bulb('#ffc81e','#c88a10')],y3:[18,18,'<circle cx="5" cy="5" r="3.600" fill="#b0bcc4" stroke="#333"/><circle cx="13" cy="13" r="3.600" fill="#ffb020" stroke="#c08010"/><path d="M10 2H14V6M12 5L14 7L16 5M7 16H3V11M1 13L3 11L5 13" stroke="#222" fill="none"/>'],y4:[18,18,arrow(2,2,g,.9)+`<circle cx="12" cy="9" r="3" fill="none" stroke="${g}"/><path d="M11 13H13V16" stroke="${g}"/>`],y5:[16,16,`<path d="M2 8L8 2V5H13V11H8V14Z" fill="#d6dce2" stroke="${g}"/>`],y6:[16,16,`<path d="M14 8L8 2V5H3V11H8V14Z" fill="#d6dce2" stroke="${g}"/>`],
y7:[18,18,`<path d="M2 7L6 2H16V11L12 16H2Z" fill="#a8a4f4" stroke="#223"/><path d="M2 7H12V16M12 7L16 2" stroke="#223" fill="none"/>`],y8:[18,18,`<path d="M1 6L5 1H14V11L10 15H1Z" fill="#f0d8a8" stroke="#543"/><path d="M1 6H10V15M10 6L14 1M5 1V11H14" stroke="#543" fill="none"/>`+arrow(9,6,'#111',.95)],
w1:[18,18,'<path d="M3 9Q3 13 9 12Q16 10 15 6Q14 4 10 4" fill="none" stroke="#333" stroke-width="2.500"/><path d="M1 10L7 7L8 15Z" fill="#333"/>'],w2:[18,18,'<path d="M1 2H9L12 6L8 8L3 7Z" fill="#ffeec0" stroke="#777"/>'+funnel(7,8)],w3:[18,18,'<path d="M4 2V9H9M2 4L4 1L6 4M1 12L4 9" stroke="#2c62b8" fill="none" stroke-width="1.500"/>'+funnel(7,8)],
d1:[18,18,`<circle cx="4" cy="4" r="3" stroke="${g}" fill="none"/><path d="M12 1L15 6H9ZM1 9H6V13H1Z" fill="none" stroke="${g}"/>`+funnel(7,8,g,'none')],d2:[18,18,`<path d="M1 8L6 3L14 5L9 9Z" fill="#ccd2d8"/>`+funnel(7,8,g,'none')],d3:[18,18,`<path d="M2 10V3L8 6L12 2L15 8" fill="none" stroke="${g}"/>`+funnel(7,8,g,'none')],d4:[18,18,`<path d="M2 8L10 2M2 8Q5 9 7 14M4 9L14 5" fill="none" stroke="${g}"/>`+funnel(7,8,g,'none')],d5:[18,18,`<path d="M5 3H15L11 8H1Z" fill="none" stroke="${g}"/>`+funnel(7,8,g,'none')],d6:[18,18,`<path d="M1 2H13V6H1ZM5 6V12" fill="none" stroke="${g}" stroke-width="1.400"/>`+funnel(7,8,g,'none')],d7:[18,18,`<path d="M2 1V7M15 1V7M2 4H15M1 15L4 8L7 15M2 12H6" fill="none" stroke="${g}"/>`+funnel(7,8,g,'none')],
o1:[20,18,'<path d="M1 1L9 9M9 1L1 9" stroke="#333" stroke-width=".8"/>'+dot(5,5)+funnel(6,8)+'<path d="M17 6L20 9L17 12Z" fill="#111"/>'],o2:[18,18,'<path d="M2 15L13 5" stroke="#222" stroke-width="1.300"/>'+dot(13,5)],o3:[18,18,'<path d="M2 16L16 2" stroke="#222" stroke-width="1.300"/>'+dot(9,9)],o4:[18,18,'<circle cx="9" cy="9" r="6" fill="none" stroke="#222"/>'+dot(9,9)],
e1:[18,18,`<path d="M1 11Q5 13 7 9Q5 5 3 9M7 9Q12 3 16 10" fill="none" stroke="${g}" stroke-width="1.300"/>`],e2:[18,18,`<path d="M6 4H17L12 13H1Z" fill="none" stroke="${g}"/><circle cx="7" cy="9" r="2" fill="none" stroke="${g}"/>`],e3:[18,18,'<path d="M3 2Q7 8 4 15M3 8L15 3M5 9L15 13" fill="none" stroke="#222" stroke-width="1.300"/>'+dot(6,9)],e4:[18,18,`<path d="M6 3H16L12 12H1ZM2 2L15 15" fill="none" stroke="${g}"/><circle cx="9" cy="8" r="2" fill="none" stroke="${g}"/>`],
o5:[18,18,'<path d="M8 11V2M8 11H16M8 11L2 16M6 4L8 1L10 4M14 9L17 11L14 13M2 13V16H5" fill="none" stroke="#222" stroke-width="1.300"/>'+dot(8,11)],o6:[18,18,dot(5,5)+arrow(9,6,'#111',.85)],e5:[18,18,`<path d="M2 2.500H16V15H2ZM5 5.500H13V12H5Z" fill="none" stroke="${g}"/><circle cx="9" cy="9" r="2" fill="none" stroke="${g}"/>`],e6:[18,18,`<text x="1" y="7" font-family="Liberation Mono" font-size="8" fill="#a0a8b0">XYZ</text><circle cx="9" cy="13" r="2" fill="none" stroke="${g}"/>`],e7:[18,18,dot(4,11)+'<circle cx="12" cy="3" r="2" fill="#fff" stroke="#333"/><path d="M5 15L16 5" stroke="#222"/><path d="M12 12L16 17M16 12L12 17" stroke="#222"/>'],e8:[18,18,'<path d="M1 1H7L5 5H1ZM12 1H16V5M3 7Q8 9 14 2" fill="none" stroke="#222"/>'+dot(4,4)+dot(14,4)+dot(9,12)+arrow(11,8,'#111',.8)],
k1:[22,24,'<path d="M5 1L18 13L12 14L15 21L12 22L9 15L5 18Z" fill="#111"/>'],k2:[24,20,'<path d="M1.500 1.500H22.500V18H1.500Z" fill="none" stroke="#111" stroke-width="2"/>'],k3:[26,26,'<path d="M2 2L24 24" stroke="#111" stroke-width="2"/>'],k4:[26,26,'<circle cx="13" cy="13" r="11.500" fill="none" stroke="#222" stroke-width="1.800"/>'],k5:[28,28,'<path d="M14 2L26 11L21 26H7L2 11Z" fill="none" stroke="#111" stroke-width="1.800"/>'],k6:[28,16,'<rect x="1.500" y="1.500" width="25" height="13" rx="6" fill="none" stroke="#333" stroke-width="2"/><path d="M5 8H10M7.500 5.500V10.500M18 8H23M20.500 5.500V10.500" stroke="#444"/>'],
n1:[14,12,'<path d="M3 1L11 11M11 1L3 11" stroke="#234"/><circle cx="7" cy="6" r="2.500" fill="#2c2"/>'],n2:[16,16,'<path d="M2 2.500H14V14H2Z" fill="none" stroke="#866"/><path d="M8 0V16M0 8H16" stroke="#222" stroke-dasharray="2 1"/><path d="M6 6H10V10H6Z" fill="#fff" stroke="#2a2"/>'],n3:[16,16,'<path d="M2 15Q3 4 14 2" fill="none" stroke="#111" stroke-width="2"/>'],n4:[18,16,'<ellipse cx="9" cy="8" rx="7" ry="5" transform="rotate(-35 9 8)" fill="none" stroke="#111" stroke-width="1.800"/>'],n5:[16,18,'<path d="M1 15Q9 17 7.500 9Q6 1 15 2" fill="none" stroke="#111" stroke-width="2"/>'],n6:[4,16,'<path d="M2 0V16" stroke="#111" stroke-width="2" stroke-dasharray="3 2"/>'],
h1:[20,20,'<path d="M2 19V2H19" fill="none" stroke="#18a028" stroke-width="2"/><path d="M3 7H8V3" fill="none" stroke="#18a028"/>'],h2:[18,18,'<path d="M2 16Q2 3 15 2" fill="none" stroke="#7ab83a" stroke-width="2"/><path d="M11 17Q11 12 17 11" fill="none" stroke="#888" stroke-width="1.600"/><path d="M8 8L12 12M8 11V8H11" stroke="#111" fill="none"/>'],h3:[18,16,`<path d="M8.500 0V16" stroke="${g}" stroke-dasharray="2 1"/><path d="M1 14L5 3V14ZM16 14L12 3V14Z" fill="none" stroke="${g}"/>`],h4:[18,18,'<path d="M1 11L8 3L15 9L8 16Z" fill="#dff2df" stroke="#18903a" stroke-width="1.500"/><path d="M12 1H17V5M17 8V16H11" fill="none" stroke="#222" stroke-dasharray="2 1"/>'],h5:[26,24,sciss(0,0,1.05)+'<path d="M26 2Q24 8 17 10" stroke="#1818e0" stroke-width="1.800" fill="none"/><path d="M6 22L13 14" stroke="#888" stroke-width="1.500" stroke-dasharray="3 2"/>'],
i1:[24,26,'<path d="M1.500 8L7 3V17L1.500 22ZM7 3H14" fill="none" stroke="#777"/><path d="M13 8L19 2V16L13 22Z" fill="#a8f088" stroke="#3a9a2a"/>'+plus(17,21)],i2:[24,26,'<path d="M1.500 8L7 3V17L1.500 22ZM7 3H14" fill="none" stroke="#777"/><path d="M13 8L19 2V16L13 22Z" fill="none" stroke="#b02040" stroke-dasharray="3 1.500" stroke-width="1.300"/>'+plus(17,21)],i3:[24,24,'<path d="M2 2V20H14" fill="none" stroke="#2c62e8" stroke-width="2"/><path d="M2 3H20V16" fill="none" stroke="#333" stroke-dasharray="4 2"/>'+plus(18,19)],i4:[22,22,'<path d="M11 1L18 5L20 18L12 21L3 19L1 14L5 5Z" fill="none" stroke="#c2c8ce" stroke-width="1.500" stroke-dasharray="4 3"/>'],
i5:[24,24,'<path d="M22 1L10 13" stroke="#667" stroke-width="1.800"/><path d="M10 12L1 19L4 23L13 15Z" fill="#f4a828" stroke="#a06a10" stroke-width=".7"/><path d="M6 6L20 20" stroke="#777" stroke-width="4"/><path d="M2 4L5 7L8 3L6 1" fill="none" stroke="#888" stroke-width="2.500"/>'],i6:[24,20,'<path d="M1 10Q6 12 9 6Q12 0 20 2" fill="none" stroke="#111" stroke-width="1.600"/><path d="M12 8L21 17M21 8L12 17" stroke="#cc1520" stroke-width="3"/>']
};
const svg=n=>{const i=ICON[n];return `<svg width="${i[0]}" height="${i[1]}" viewBox="0 0 ${i[0]} ${i[1]}" fill="#000">${i[2]}</svg>`};
const cell=(n,w,h)=>`<span class="ic" style="width:${w}px;height:${h}px">${svg(n)}</span>`;
const sep='<span class="vsep"></span>';
const tile=([n,w,label,lw,car])=>n==='|'?sep:Array.isArray(n)?`<div class="d-flex flex-column">${n.map(k=>cell(k,w,label)).join('')}</div>`:
 `<div class="tile d-flex flex-column align-items-center" style="width:${w}px">${svg(n)}<div class="cap">${label.split('/').map((t,i)=>`<span ${i?'':`data-w="${lw}"`}>${t}</span>`).join('<br>')}</div>${car?'<span class="caret"></span>':''}</div>`;
/* [left, right, padding after the grip, tiles] */
const groups=[
[8,426,3,[['r1',36,'押出し',30],['r2',36,'ﾌｨﾚｯﾄ',29,1],['r3',36,'面取り',29],['r4',36,'ﾃｰﾊﾟ',21,1],['|'],['r5',58,'削除と延長',52],['r6',56,'ﾀﾞｲﾚｸﾄﾓﾃﾞ/ﾘﾝｸﾞ',50],['r7',73,'ﾌｨﾚｯﾄｻｲｽﾞ 変/更',65],['|'],[['s1','s2','s3'],22,23.5],['|'],['r8',44,'切り取り',37,1]]],
[431,829,0,[['f1',38,'掃引',21],['f2',36,'領域',22],['f3',38,'ﾌﾞﾚﾝﾄﾞ',32],['f4',42,'拡張',22],['f5',36,'面ﾄﾘﾑ',27],['f6',37,'面分割',32],['|'],['j1',38,'接合',22],['j2',49,'接合解除',43],['|'],['j3',66,'ｽｹｯﾁｬで修正',60,1]]],
[834,873,0,[[['sketch','poly2'],24,23.5]]],
[878,1082,0,[['p1',53,'平面 平行',47,1],['p2',60,'座標系 ｺﾋﾟｰ',59,1],['|'],['p3',74,'座標系有効化',65]]],
[1087,1207,2,[[['dim','A'],36,36],[['a1','a3','a5'],22,23.5],[['a2','a4','a6'],20,23.5],['|'],[['b1','b2','b3'],22,23.5]]],
[1211,1266,0,[[['c1','c2'],40,37]]],
[1269,1325,0,[['m1',42,'計測',22]]],
[1328,1421,0,[[['z1','z3'],41,36],[['z2','z4'],34,36]]],
[1424,1507,2,[[['v1','v4','v6'],22,23.5],[['v2','v5','v7'],21,23.5],[['v3'],20,23.5]]],
[1509,1655,3,[[['pal'],59,71],[['cur'],25,65],['|'],[['l1','l2','l3'],20,23.5],[['l4'],22,23.5]]]];
let at=8;
ribbon.innerHTML=groups.map(([l,r,p,t])=>{const m=l-at;at=r;return `<div class="grp d-flex" style="width:${r-l}px;margin-left:${m}px"><span class="grip" style="margin-right:${p}px">${svg('grip')}</span>${t.map(tile).join('')}</div>`}).join('');
const bar=(el,list)=>el.innerHTML=list.map(([n,w,c])=>n==='|'?sep:n==='v'?`<span class="ic" style="width:${w}px"><span class="caret"></span></span>`:`<span class="ic ${c||''}" style="width:${w}px">${svg(n)}</span>`).join('');
bar(quick,[['save',22],['open',20],['q1',24],['v',7],['q2',22],['v',8],['q3',22],['v',8],['q4',22],['v',8],['q5',28],['undo',16],['v',8],['redo',22],['v',6],['q6',20],['list',25]]);
bar(vb1,[['x1',22],['x2',22],['|'],['x3',20],['v',10],['x4',20],['v',10],['x5',20],['v',10],['x6',20],['v',12]]);
bar(vb2,[['y1',23],['y2',21],['y3',21],['y4',21],['y5',21],['y6',20],['|'],['y7',21],['v',10],['y8',20],['v',11]]);
bar(vb3,[['w1',23],['w2',21],['|'],['w3',22],['|'],...['d1','d2','d3','d4','d5','d6','d7'].map(n=>[n,21.1]),['|'],['o1',23.5,'hot'],...['o2','o3','o4'].map(n=>[n,21.1,'hot']),...['e1','e2','e3','e4'].map(n=>[n,21.2]),['o5',21.2,'hot'],['o6',21.2,'hot'],...['e5','e6','e7','e8'].map(n=>[n,21.2])]);
rail.innerHTML=[['grip2',8],['k1',36],['|'],['k2',37],['k3',34,1],['k4',36],['k5',34],['k6',35],['|'],['dim',36],['|'],['n1',19],['n2',20],['n3',19],['n4',19],['n5',19],['n6',19],['|'],['h1',35],['h2',20],['h3',19],['h4',19],['|'],['h5',38],['v',16],['|'],['i1',35],['i2',35],['|'],['i3',38],['i4',33],['|'],['i5',38],['v',4],['i6',52]].map(([n,h,a])=>n==='|'?'<span class="hsep"></span>':n==='v'?`<span class="ic" style="height:${h}px"><span class="caret"></span></span>`:`<span class="ic ${a?'hot mx-1':''}" style="height:${h}px">${svg(n)}</span>`).join('');
document.querySelectorAll('[data-i]').forEach(e=>e.innerHTML=svg(e.dataset.i));
/* sketch plane grid: every fifth line is heavier */
const O=[1112,555],A=[58.9,16.37],B=[-29.5,32.9];let out='';
for(let k=-40;k<=40;k++){const big=k%5===0;
 const line=(S,D,n,dash,w)=>`<path d="M${O[0]+S[0]*k-D[0]*n} ${O[1]+S[1]*k-D[1]*n}L${O[0]+S[0]*k+D[0]*n} ${O[1]+S[1]*k+D[1]*n}" stroke="${big?'#a6a6a6':'#a9a9a9'}" stroke-width="${w}" stroke-dasharray="${dash}"/>`;
 out+=line(B,A,40,big?'9 4':'7 4',big?2:1)+line(A,B,40,big?'20 6':'16 7',big?1.5:1);}
grid.innerHTML=out;
/* track each caption out to its design width */
document.querySelectorAll('[data-w]').forEach(e=>{e.style.display='inline-block';const n=e.textContent.length,w=e.getBoundingClientRect().width;e.style.letterSpacing=(e.dataset.w-w)/n+'px'});
</script>
</body>
</html>
